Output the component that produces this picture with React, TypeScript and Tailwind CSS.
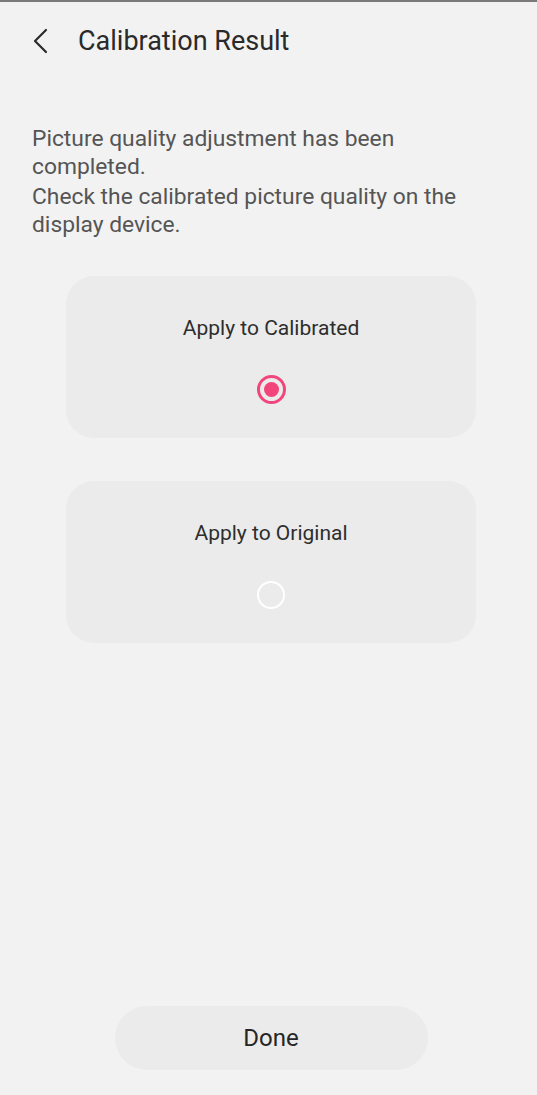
import React, { useState } from 'react';

const font = { fontFamily: 'Roboto, "Noto Sans", sans-serif' };

const App: React.FC = () => {
  const [choice, setChoice] = useState<'calibrated' | 'original'>('calibrated');

  const options = [
    { value: 'calibrated' as const, label: 'Apply to Calibrated' },
    { value: 'original' as const, label: 'Apply to Original' },
  ];

  return (
    <div className="min-h-screen bg-[#f2f2f2] flex flex-col border-t-2 border-[#7a7a7a]" style={font}>
      {/* Header */}
      <div className="h-[78px] flex items-center pl-[31px]">
        <button className="w-[20px] h-[28px] flex items-center justify-center text-[#2b2b2b]">
          <svg width="18" height="26" viewBox="0 0 18 26" fill="none">
            <path d="M14 2 L3 13 L14 24" stroke="currentColor" strokeWidth="2.2" strokeLinecap="round" strokeLinejoin="round" />
          </svg>
        </button>
        <h1 className="ml-[27px] text-[27px] text-[#2a2a2a]">Calibration Result</h1>
      </div>

      {/* Description */}
      <div className="pl-[32px] mt-[45px] w-[474px] text-[22.8px] leading-[28px] text-[#555555]">
        <p>Picture quality adjustment has been completed.</p>
        <p className="mt-[2px]">Check the calibrated picture quality on the display device.</p>
      </div>

      {/* Options */}
      <div className="flex flex-col items-center gap-[43px] mt-[37px] pl-[5px]">
        {options.map((opt) => {
          const selected = choice === opt.value;
          return (
            <button
              key={opt.value}
              onClick={() => setChoice(opt.value)}
              className="w-[410px] h-[162px] rounded-[28px] bg-[#ebebeb] flex flex-col items-center pt-[38px]"
            >
              <span className="text-[21px] leading-[28px] text-[#2e2e2e]">{opt.label}</span>
              <span className="mt-[33px] w-[29px] h-[29px] rounded-full flex items-center justify-center">
                {selected ? (
                  <span className="w-[29px] h-[29px] rounded-full border-[3px] border-[#f2457c] flex items-center justify-center">
                    <span className="w-[15px] h-[15px] rounded-full bg-[#f2457c]" />
                  </span>
                ) : (
                  <span className="w-[28px] h-[28px] rounded-full border-[2.5px] border-white" />
                )}
              </span>
            </button>
          );
        })}
      </div>

      {/* Done */}
      <div className="mt-auto flex justify-center pb-[25px] pl-[5px]">
        <button className="w-[313px] h-[64px] rounded-full bg-[#ebebeb] text-[24px] text-[#262626]">
          Done
        </button>
      </div>
    </div>
  );
};

export default App;
